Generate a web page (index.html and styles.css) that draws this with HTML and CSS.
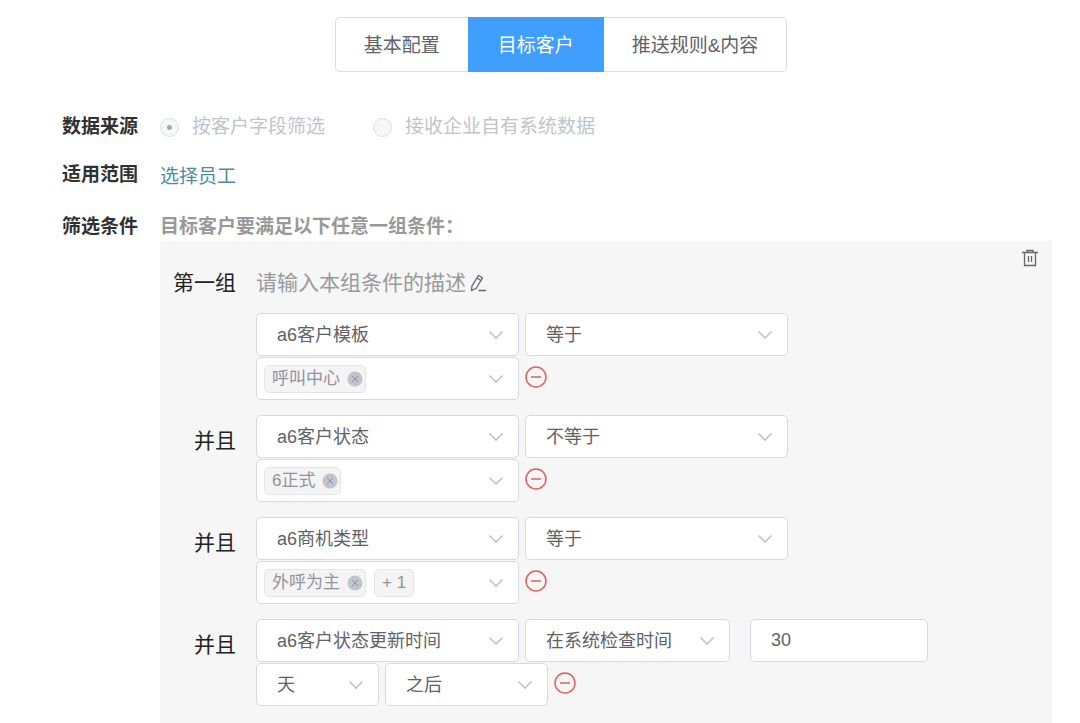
FILE: index.html
```html
<!DOCTYPE html>
<html lang="zh-CN">
<head>
    <meta charset="UTF-8">
    <meta name="viewport" content="width=device-width, initial-scale=1">
    <title>目标客户</title>
    <link rel="stylesheet" href="styles.css">
</head>
<body>
    <svg class="sprite" aria-hidden="true">
        <symbol id="arrow" viewBox="0 0 16 10"><path d="M1.5 1.5 8 8l6.500-6.500"/></symbol>
        <symbol id="minus" viewBox="0 0 22 22"><circle cx="11" cy="11" r="10"/><path d="M6 11h10"/></symbol>
        <symbol id="close" viewBox="0 0 16 16"><circle cx="8" cy="8" r="7.500" stroke="none"/><path d="m5 5 6 6M11 5l-6 6"/></symbol>
    </svg>

    <nav class="tabs">
        <button type="button" class="tab">基本配置</button>
        <button type="button" class="tab active">目标客户</button>
        <button type="button" class="tab">推送规则&amp;内容</button>
    </nav>

    <form class="form">
        <div class="form-row">
            <span class="form-label">数据来源</span>
            <div class="radios">
                <label class="radio"><input type="radio" name="source" checked disabled>按客户字段筛选</label>
                <label class="radio"><input type="radio" name="source" disabled>接收企业自有系统数据</label>
            </div>
        </div>

        <div class="form-row scope">
            <span class="form-label">适用范围</span>
            <a href="#" class="link">选择员工</a>
        </div>

        <div class="form-row">
            <span class="form-label">筛选条件</span>
            <div class="filter">
                <div class="filter-title">目标客户要满足以下任意一组条件：</div>

                <section class="group">
                    <button type="button" class="icon-btn delete" aria-label="删除本组">
                        <svg width="16" height="18" viewBox="0 0 16 18"><path d="M0 3.500h16M5 3V1.500h6v2M2.500 4v12.500h11V4M6.500 7v6M9.500 7v6"/></svg>
                    </button>

                    <div class="group-head">
                        <span class="group-label">第一组</span>
                        <span class="group-desc">请输入本组条件的描述</span>
                        <button type="button" class="icon-btn edit" aria-label="编辑描述">
                            <svg width="16" height="18" viewBox="0 0 16 18"><path d="m8.500 1.500 4 2.500-6.500 10.500-4.500 2 .5-4.500zM7 4l4 2.500M8.500 16.500H16"/></svg>
                        </button>
                    </div>

                    <div class="condition">
                        <span class="group-label"></span>
                        <div class="fields">
                            <div class="line">
                                <div class="select"><select aria-label="字段"><option>a6客户模板</option></select><svg class="arrow"><use href="#arrow"/></svg></div>
                                <div class="select"><select aria-label="关系"><option>等于</option></select><svg class="arrow"><use href="#arrow"/></svg></div>
                            </div>
                            <div class="line">
                                <div class="select tags">
                                    <span class="tag">呼叫中心<button type="button" class="icon-btn close" aria-label="移除"><svg><use href="#close"/></svg></button></span>
                                    <svg class="arrow"><use href="#arrow"/></svg>
                                </div>
                                <button type="button" class="icon-btn minus" aria-label="删除条件"><svg><use href="#minus"/></svg></button>
                            </div>
                        </div>
                    </div>

                    <div class="condition">
                        <span class="group-label">并且</span>
                        <div class="fields">
                            <div class="line">
                                <div class="select"><select aria-label="字段"><option>a6客户状态</option></select><svg class="arrow"><use href="#arrow"/></svg></div>
                                <div class="select"><select aria-label="关系"><option>不等于</option></select><svg class="arrow"><use href="#arrow"/></svg></div>
                            </div>
                            <div class="line">
                                <div class="select tags">
                                    <span class="tag">6正式<button type="button" class="icon-btn close" aria-label="移除"><svg><use href="#close"/></svg></button></span>
                                    <svg class="arrow"><use href="#arrow"/></svg>
                                </div>
                                <button type="button" class="icon-btn minus" aria-label="删除条件"><svg><use href="#minus"/></svg></button>
                            </div>
                        </div>
                    </div>

                    <div class="condition">
                        <span class="group-label">并且</span>
                        <div class="fields">
                            <div class="line">
                                <div class="select"><select aria-label="字段"><option>a6商机类型</option></select><svg class="arrow"><use href="#arrow"/></svg></div>
                                <div class="select"><select aria-label="关系"><option>等于</option></select><svg class="arrow"><use href="#arrow"/></svg></div>
                            </div>
                            <div class="line">
                                <div class="select tags">
                                    <span class="tag">外呼为主<button type="button" class="icon-btn close" aria-label="移除"><svg><use href="#close"/></svg></button></span>
                                    <span class="tag more">+ 1</span>
                                    <svg class="arrow"><use href="#arrow"/></svg>
                                </div>
                                <button type="button" class="icon-btn minus" aria-label="删除条件"><svg><use href="#minus"/></svg></button>
                            </div>
                        </div>
                    </div>

                    <div class="condition">
                        <span class="group-label">并且</span>
                        <div class="fields">
                            <div class="line">
                                <div class="select"><select aria-label="字段"><option>a6客户状态更新时间</option></select><svg class="arrow"><use href="#arrow"/></svg></div>
                                <div class="select base"><select aria-label="基准时间"><option>在系统检查时间</option></select><svg class="arrow"><use href="#arrow"/></svg></div>
                                <input type="text" class="number" value="30" aria-label="数值">
                            </div>
                            <div class="line">
                                <div class="select unit"><select aria-label="单位"><option>天</option></select><svg class="arrow"><use href="#arrow"/></svg></div>
                                <div class="select direction"><select aria-label="方向"><option>之后</option></select><svg class="arrow"><use href="#arrow"/></svg></div>
                                <button type="button" class="icon-btn minus" aria-label="删除条件"><svg><use href="#minus"/></svg></button>
                            </div>
                        </div>
                    </div>
                </section>
            </div>
        </div>
    </form>
</body>
</html>
```
FILE: styles.css
```css
* {
    box-sizing: border-box;
}
body {
    margin: 0;
    background-color: #fff;
    color: #606266;
    font-family: "Liberation Sans", "Noto Sans CJK SC", sans-serif;
    font-size: 19px;
    line-height: 28px;
}
button, input, select {
    font-family: inherit;
    color: inherit;
}
svg {
    display: block;
    fill: none;
    stroke: currentColor;
}
.sprite {
    position: absolute;
    width: 0;
    height: 0;
}

/* tabs */
.tabs {
    display: flex;
    justify-content: center;
    padding: 17px 0 0 42px;
}
.tab {
    height: 55px;
    padding: 0 28px 2px;
    border: 1px solid #d9dce2;
    border-width: 1px 0;
    background-color: #fff;
    font-size: 19px;
}
.tab:first-child {
    border-left-width: 1px;
    border-radius: 5px 0 0 5px;
}
.tab:last-child {
    border-right-width: 1px;
    border-radius: 0 5px 5px 0;
}
.tab.active {
    padding: 0 30px 2px;
    border-color: #409eff;
    background-color: #409eff;
    color: #fff;
}

/* form */
.form {
    padding: 41px 28px 0 62px;
}
.form-row {
    display: grid;
    grid-template-columns: 78px 1fr;
    column-gap: 20px;
}
.form-row.scope {
    margin: 20px 0 22px;
}
.form-label {
    color: #303133;
    font-weight: bold;
}
.radios {
    display: flex;
    gap: 48px;
    color: #c0c4cc;
}
.radio {
    display: flex;
    align-items: center;
    gap: 13px;
}
.radio input {
    appearance: none;
    width: 19px;
    height: 19px;
    margin: 0;
    border: 1px solid #dcdfe6;
    border-radius: 50%;
    background-color: #f5f7fa;
}
.radio input:checked {
    background-image: radial-gradient(circle, #a8abb2 2px, transparent 3px);
}
.link {
    justify-self: start;
    padding-top: 2px;
    color: #4f8c9f;
    text-decoration: none;
}
.filter-title {
    color: #999;
    font-weight: bold;
}

/* condition group */
.group {
    position: relative;
    padding: 12px 0 17px;
    background-color: #f6f6f6;
}
.group-head {
    display: flex;
    align-items: center;
    height: 60px;
    font-size: 21px;
}
.group-label {
    flex: none;
    width: 76px;
    margin-right: 20px;
    color: #222;
    font-size: 21px;
    line-height: 52px;
    text-align: right;
}
.group-desc {
    margin-right: 4px;
    color: #999;
}
.icon-btn {
    flex: none;
    padding: 0;
    border: 0;
    background: none;
    cursor: pointer;
}
.delete {
    position: absolute;
    top: 8px;
    right: 14px;
    color: #666;
}
.edit {
    color: #666;
}
.delete svg, .edit svg {
    stroke-width: 1.3;
}
.condition {
    display: flex;
}
.condition + .condition {
    margin-top: 15px;
}
.fields {
    display: grid;
    row-gap: 1px;
}
.line {
    display: flex;
    align-items: center;
    gap: 6px;
}
.select {
    position: relative;
    width: 263px;
    height: 43px;
}
.select select, .number, .tags {
    border: 1px solid #d6d9df;
    border-radius: 5px;
    background-color: #fff;
}
.select select {
    appearance: none;
    width: 100%;
    height: 100%;
    padding: 0 40px 0 20px;
    font-size: 18px;
}
.arrow {
    position: absolute;
    top: 17px;
    right: 15px;
    width: 16px;
    height: 10px;
    color: #c0c4cc;
    stroke-width: 1.6;
    pointer-events: none;
}
.tags .arrow {
    top: 16px;
    right: 14px;
}
.base {
    width: 205px;
}
.unit {
    width: 123px;
}
.direction {
    width: 163px;
}
.number {
    width: 178px;
    height: 43px;
    margin-left: 14px;
    padding: 0 20px;
    font-size: 18px;
}
.tags {
    display: flex;
    align-items: center;
    gap: 8px;
    padding: 0 7px;
}
.tag {
    display: flex;
    align-items: center;
    gap: 7px;
    height: 28px;
    padding: 0 2px 0 7px;
    border: 1px solid #e4e5e8;
    border-radius: 5px;
    background-color: #f4f4f5;
    color: #909399;
    font-size: 17px;
}
.tag.more {
    padding: 0 7px;
}
.close svg {
    width: 16px;
    height: 16px;
    fill: #c0c4cc;
}
.close {
    color: #909399;
}
.minus {
    padding-bottom: 4px;
    color: #e0605e;
}
.minus svg {
    width: 22px;
    height: 22px;
    stroke-width: 1.5;
}
```
